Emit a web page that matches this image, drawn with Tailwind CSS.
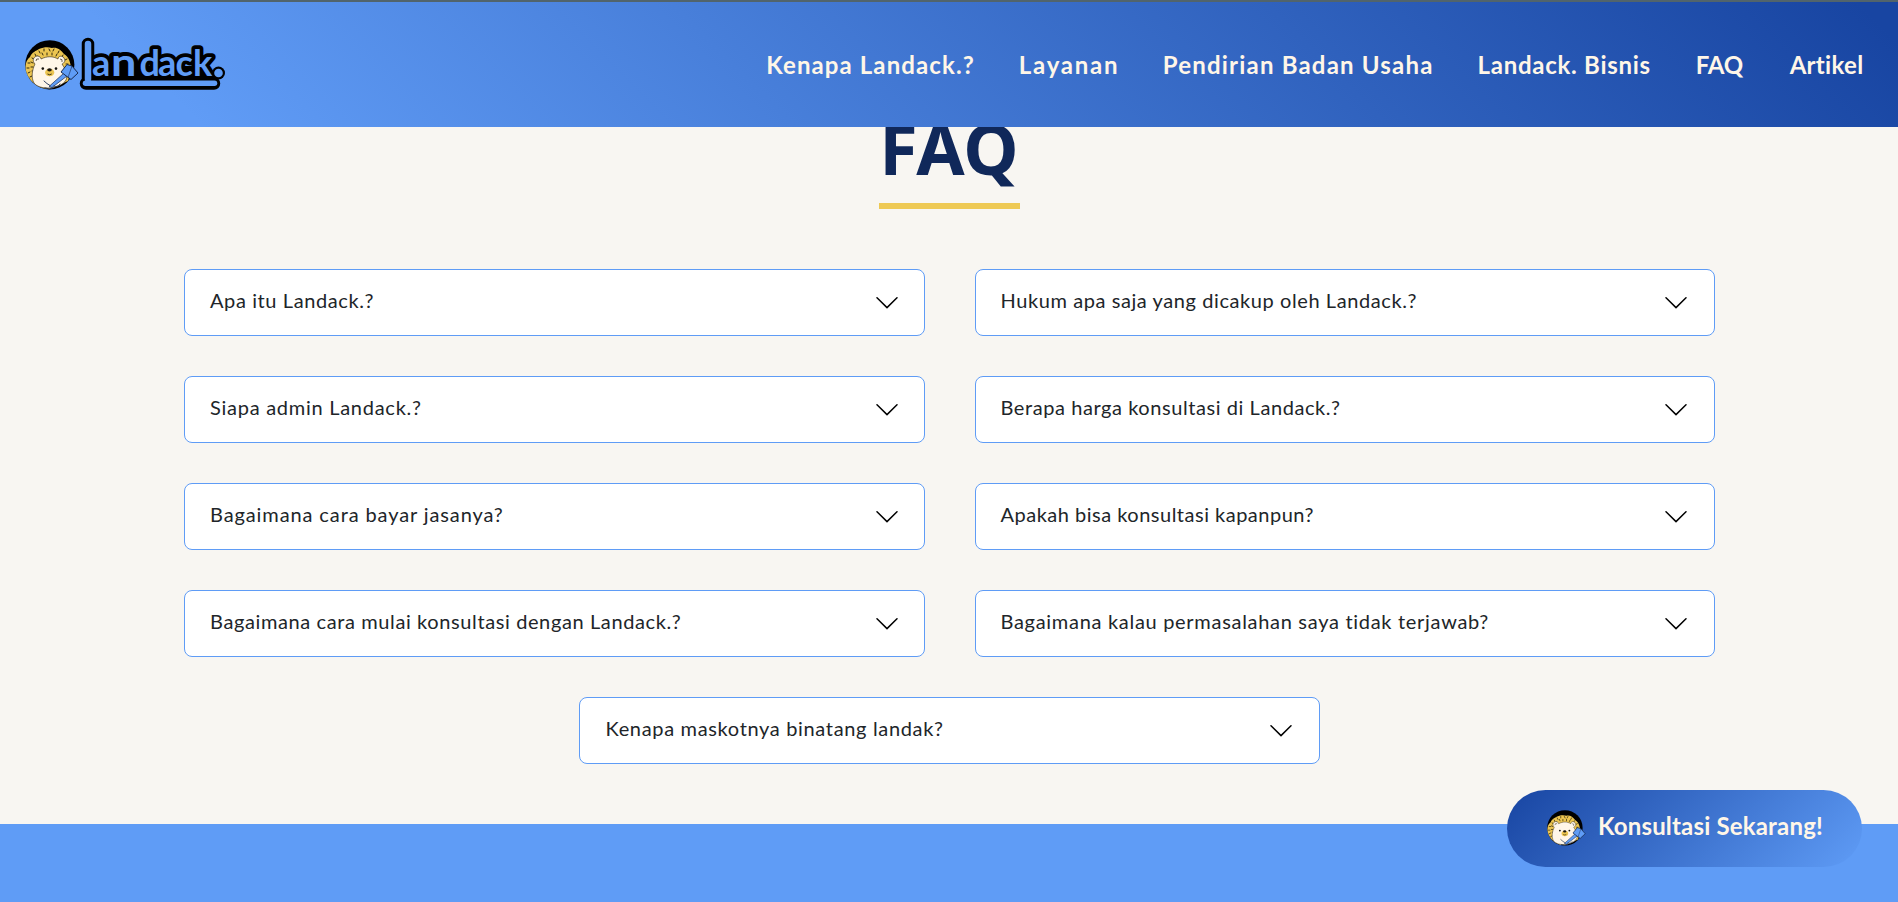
<!DOCTYPE html>
<html lang="id">
<head>
<meta charset="utf-8">
<title>Landack. FAQ</title>
<script src="https://cdn.jsdelivr.net/npm/@tailwindcss/browser@4"></script>
</head>
<body class="h-[902px] overflow-hidden bg-[#f8f6f2] font-[Lato,sans-serif] text-[#212529]">
<svg class="hidden">
  <symbol id="chevron" viewBox="0 0 22 12"><path d="M1 .8 11 10.6 21 .8" fill="none" stroke="#000" stroke-width="1.5" stroke-linecap="round" stroke-linejoin="round"/></symbol>
  <symbol id="hedgehog" viewBox="0 0 54 50">
    <circle cx="24.8" cy="24.8" r="24.6" fill="#000"/>
    <path d="M2 34C-1 26 1 20 5 17 7 12 11 11 14 9 19 7 23 7 27 8 32 7 36 10 39 14 44 17 46 23 46 30L43 41 25 49C15 49 6 43 2 34Z" fill="#ecc551"/>
    <g stroke="#31280f" stroke-width="1" stroke-linecap="round"><path d="M14 11l1 2M19 9l0 2M24 9l1 2M29 9l-1 2M34 11l-1 2M38 15l-1 2M10 14l1 2M7 18l2 1M17 13l1 2M22 13l0 2M27 13l0 2M32 14l-1 2M36 18l-2 1M42 19l-2 1M3 23l2 0M6 22l2 1M2 28l2 0M6 27l2 0M3 33l2-1M7 31l1 0M5 37l2-1M8 35l1-1M9 40l2-1M43 24l-2 0M13 16l1 1"/></g>
    <path d="M10 24C7 21 8 17 12 16 15 16 16 18 16 19 22 16 28 16 33 19 33 16 37 15 39 18 41 21 39 23 37 24 41 30 43 35 41 40 36 49 15 51 9 43 6 38 7 30 10 24Z" fill="#fff6e8" stroke="#2b2417" stroke-width=".6"/>
    <path d="M11 21q0-3 3-2M35 19q3 0 2 3" fill="none" stroke="#2b2417" stroke-width=".7"/>
    <ellipse cx="24.700" cy="32.500" rx="4.600" ry="3.800" fill="#ecc551"/>
    <ellipse cx="24.500" cy="29.800" rx="2.300" ry="1.600" fill="#17140f"/>
    <path d="M22.500 34q2 1.500 4.200 0" fill="none" stroke="#17140f" stroke-width=".8"/>
    <circle cx="17.800" cy="28.600" r="1.300" fill="#17140f"/><circle cx="31" cy="28.600" r="1.300" fill="#17140f"/>
    <path d="M39 33L24 46.500 27 47.500 42 36Z" fill="#5f9cf6" stroke="#182b52" stroke-width=".7"/>
    <path d="M42 24.500L47 26 53 33 46 39.500 36 32Z" fill="#5f9cf6" stroke="#182b52" stroke-width="1" stroke-linejoin="round"/>
    <path d="M47 26L43 37.500" stroke="#182b52" stroke-width=".6"/>
    <path d="M19 41q3 3 6 4.500M29 46q3 2 6-2M20 48q4 2 8 0" fill="none" stroke="#182b52" stroke-width=".9" stroke-linecap="round"/>
  </symbol>
</svg>

<header class="relative z-10 flex h-[127px] items-center justify-between border-t-2 border-[#51646c] bg-[linear-gradient(45deg,#609cf6_10%,#1845a2_98%)] pt-px pr-[34.5px] pl-[25px]">
  <a class="flex items-center" aria-label="Landack.">
    <svg class="h-[50px] w-[54px]"><use href="#hedgehog"/></svg>
    <svg class="-ml-px h-[60px] w-[150px] overflow-visible" viewBox="78 35 150 60">
      <g fill="none" stroke="#000" stroke-linejoin="round" stroke-linecap="round">
        <path d="M88 44V82M86 83.500H214" stroke-width="12.500"/>
        <path d="M98 68H208V80H98Z" fill="#000" stroke-width="4"/>
      </g>
      <circle cx="218.500" cy="73" r="6.500" fill="#000"/>
      <g class="font-[Lato,sans-serif] font-bold" font-size="36" fill="#000" stroke="#000" stroke-width="7.500" stroke-linejoin="round">
        <text y="75.500" x="92">a</text>
        <text transform="translate(111 75.500) scale(1.250 1.060)">n</text>
        <text y="75.500" x="139.500 158 175.500 193">dack</text>
      </g>
      <g fill="none" stroke="#5f9cf6" stroke-linecap="round" stroke-linejoin="round">
        <path d="M88 44V79" stroke-width="6.500"/><path d="M85.500 83.200H214.500" stroke-width="5.500"/>
      </g>
      <g class="font-[Lato,sans-serif] font-bold" font-size="36" fill="#5f9cf6">
        <text y="75.500" x="92">a</text>
        <text transform="translate(111 75.500) scale(1.250 1.060)">n</text>
        <text y="75.500" x="139.500 158 175.500 193">dack</text>
      </g>
      <circle cx="218.500" cy="73" r="4.300" fill="#5f9cf6"/>
    </svg>
  </a>
  <nav class="flex gap-[45px] text-[24px] leading-[30px] font-bold whitespace-nowrap text-[#fff6e8]">
    <a class="-mr-px tracking-[1.1px]">Kenapa Landack.?</a>
    <a class="-mr-[1.5px] tracking-[1.75px]">Layanan</a>
    <a class="-mr-px tracking-[1.2px]">Pendirian Badan Usaha</a>
    <a class="tracking-[0.73px]">Landack. Bisnis</a>
    <a class="mr-[1.5px] tracking-[-0.15px]">FAQ</a>
    <a class="tracking-[0.323px]">Artikel</a>
  </nav>
</header>

<main class="-mt-[32px] flex h-[729px] flex-col items-center">
  <h1 class="h-[114px] w-[141px] border-b-6 border-[#eec954] pt-[8px] text-center font-['Noto_Sans',sans-serif] text-[70px] leading-[90px] font-bold text-[#10285a]">FAQ</h1>
  <div class="mt-[60px] ml-px flex w-[1531px] flex-wrap justify-center gap-x-[50px] gap-y-[40px] text-[20px] leading-6 whitespace-nowrap">
    <div class="flex h-[67px] w-[740.5px] items-center justify-between rounded-lg border border-[#5f9cf6] bg-white pr-[26px] pl-[25px]"><span class="-mt-[6px] tracking-[0.6px]">Apa itu Landack.?</span><svg class="h-3 w-[22px]"><use href="#chevron"/></svg></div>
    <div class="flex h-[67px] w-[740.5px] items-center justify-between rounded-lg border border-[#5f9cf6] bg-white pr-[27px] pl-[25px]"><span class="-mt-[6px] tracking-[0.585px]">Hukum apa saja yang dicakup oleh Landack.?</span><svg class="h-3 w-[22px]"><use href="#chevron"/></svg></div>
    <div class="flex h-[67px] w-[740.5px] items-center justify-between rounded-lg border border-[#5f9cf6] bg-white pr-[26px] pl-[25px]"><span class="-mt-[6px] tracking-[0.73px]">Siapa admin Landack.?</span><svg class="h-3 w-[22px]"><use href="#chevron"/></svg></div>
    <div class="flex h-[67px] w-[740.5px] items-center justify-between rounded-lg border border-[#5f9cf6] bg-white pr-[27px] pl-[25px]"><span class="-mt-[6px] tracking-[0.57px]">Berapa harga konsultasi di Landack.?</span><svg class="h-3 w-[22px]"><use href="#chevron"/></svg></div>
    <div class="flex h-[67px] w-[740.5px] items-center justify-between rounded-lg border border-[#5f9cf6] bg-white pr-[26px] pl-[25px]"><span class="-mt-[6px] tracking-[0.89px]">Bagaimana cara bayar jasanya?</span><svg class="h-3 w-[22px]"><use href="#chevron"/></svg></div>
    <div class="flex h-[67px] w-[740.5px] items-center justify-between rounded-lg border border-[#5f9cf6] bg-white pr-[27px] pl-[25px]"><span class="-mt-[6px] tracking-[0.5px]">Apakah bisa konsultasi kapanpun?</span><svg class="h-3 w-[22px]"><use href="#chevron"/></svg></div>
    <div class="flex h-[67px] w-[740.5px] items-center justify-between rounded-lg border border-[#5f9cf6] bg-white pr-[26px] pl-[25px]"><span class="-mt-[6px] tracking-[0.61px]">Bagaimana cara mulai konsultasi dengan Landack.?</span><svg class="h-3 w-[22px]"><use href="#chevron"/></svg></div>
    <div class="flex h-[67px] w-[740.5px] items-center justify-between rounded-lg border border-[#5f9cf6] bg-white pr-[27px] pl-[25px]"><span class="-mt-[6px] tracking-[0.7px]">Bagaimana kalau permasalahan saya tidak terjawab?</span><svg class="h-3 w-[22px]"><use href="#chevron"/></svg></div>
    <div class="flex h-[67px] w-[741px] items-center justify-between rounded-lg border border-[#5f9cf6] bg-white pr-[27px] pl-[25.5px]"><span class="-mt-[6px] tracking-[0.661px]">Kenapa maskotnya binatang landak?</span><svg class="h-3 w-[22px]"><use href="#chevron"/></svg></div>
  </div>
</main>

<footer class="h-[78px] bg-[#5f9cf6]"></footer>

<a class="fixed right-[36px] bottom-[35px] flex h-[77px] w-[355px] items-center rounded-full bg-[linear-gradient(135deg,#1845a2,#5f9cf6)] pl-10 text-[24px] leading-[30px] font-bold whitespace-nowrap text-[#fff6e8]">
  <svg class="-mt-[2px] h-[36px] w-[39px]"><use href="#hedgehog"/></svg>
  <span class="-mt-[6px] ml-[12px] tracking-[0.176px]">Konsultasi Sekarang!</span>
</a>
</body>
</html>
